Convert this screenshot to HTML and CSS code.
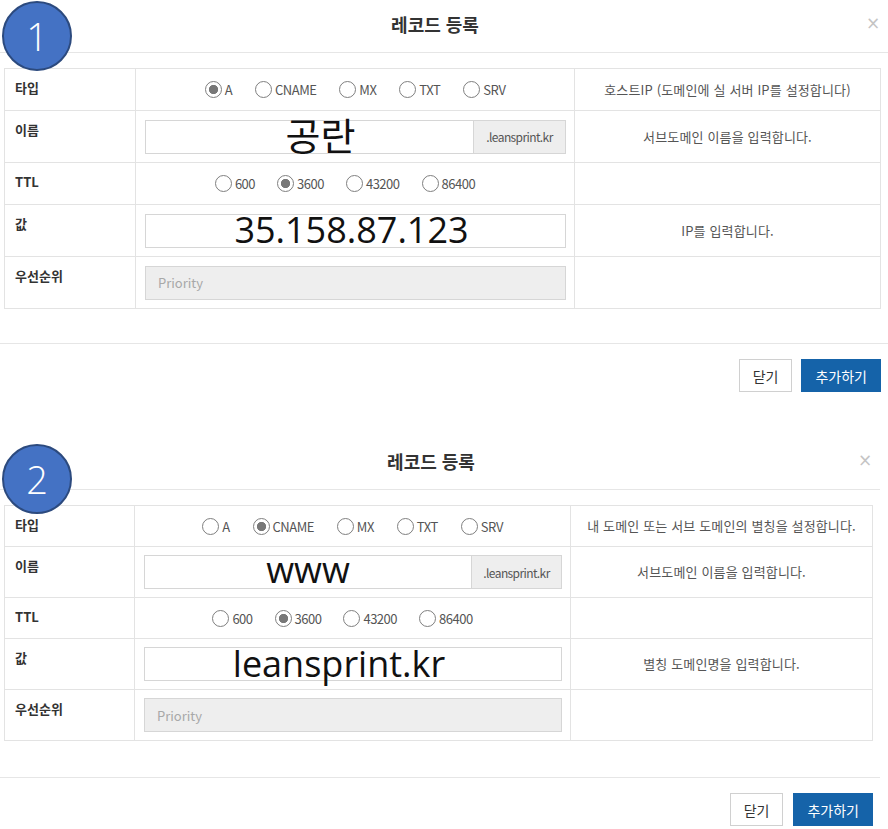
FILE: index.html
```html
<!DOCTYPE html>
<html lang="ko">
<head>
<meta charset="utf-8">
<title>레코드 등록</title>
<link rel="stylesheet" href="styles.css">
</head>
<body>
<section class="modal modal--one">
  <span class="badge">1</span>
  <header class="modal-head">
    <h2 class="modal-title">레코드 등록</h2>
    <button class="close" type="button">×</button>
  </header>
  <div class="modal-body">
    <table class="rec">
      <colgroup><col class="c1"><col class="c2"><col class="c3"></colgroup>
      <tr class="row-radio">
        <th>타입</th>
        <td><div class="radios">
          <label class="opt"><input type="radio" name="t1" checked>A</label>
          <label class="opt"><input type="radio" name="t1">CNAME</label>
          <label class="opt"><input type="radio" name="t1">MX</label>
          <label class="opt"><input type="radio" name="t1">TXT</label>
          <label class="opt"><input type="radio" name="t1">SRV</label>
        </div></td>
        <td class="desc">호스트IP (도메인에 실 서버 IP를 설정합니다)</td>
      </tr>
      <tr class="row-field">
        <th>이름</th>
        <td class="cell-field"><div class="field"><span class="field-text field-text--shift">공란</span><span class="addon">.leansprint.kr</span></div></td>
        <td class="desc">서브도메인 이름을 입력합니다.</td>
      </tr>
      <tr class="row-radio">
        <th>TTL</th>
        <td><div class="radios radios--ttl">
          <label class="opt"><input type="radio" name="l1">600</label>
          <label class="opt"><input type="radio" name="l1" checked>3600</label>
          <label class="opt"><input type="radio" name="l1">43200</label>
          <label class="opt"><input type="radio" name="l1">86400</label>
        </div></td>
        <td class="desc"></td>
      </tr>
      <tr class="row-field">
        <th>값</th>
        <td class="cell-field"><div class="field"><span class="field-text field-text--ip">35.158.87.123</span></div></td>
        <td class="desc">IP를 입력합니다.</td>
      </tr>
      <tr class="row-field">
        <th>우선순위</th>
        <td class="cell-field"><input class="field-input" type="text" placeholder="Priority" disabled></td>
        <td class="desc"></td>
      </tr>
    </table>
  </div>
  <footer class="modal-foot">
    <button class="btn" type="button">닫기</button>
    <button class="btn btn-primary" type="button">추가하기</button>
  </footer>
</section>

<section class="modal modal--two">
  <span class="badge">2</span>
  <header class="modal-head">
    <h2 class="modal-title">레코드 등록</h2>
    <button class="close" type="button">×</button>
  </header>
  <div class="modal-body">
    <table class="rec">
      <colgroup><col class="c1"><col class="c2"><col class="c3"></colgroup>
      <tr class="row-radio">
        <th>타입</th>
        <td><div class="radios">
          <label class="opt"><input type="radio" name="t2">A</label>
          <label class="opt"><input type="radio" name="t2" checked>CNAME</label>
          <label class="opt"><input type="radio" name="t2">MX</label>
          <label class="opt"><input type="radio" name="t2">TXT</label>
          <label class="opt"><input type="radio" name="t2">SRV</label>
        </div></td>
        <td class="desc">내 도메인 또는 서브 도메인의 별칭을 설정합니다.</td>
      </tr>
      <tr class="row-field">
        <th>이름</th>
        <td class="cell-field"><div class="field"><span class="field-text">www</span><span class="addon">.leansprint.kr</span></div></td>
        <td class="desc">서브도메인 이름을 입력합니다.</td>
      </tr>
      <tr class="row-radio">
        <th>TTL</th>
        <td><div class="radios radios--ttl">
          <label class="opt"><input type="radio" name="l2">600</label>
          <label class="opt"><input type="radio" name="l2" checked>3600</label>
          <label class="opt"><input type="radio" name="l2">43200</label>
          <label class="opt"><input type="radio" name="l2">86400</label>
        </div></td>
        <td class="desc"></td>
      </tr>
      <tr class="row-field">
        <th>값</th>
        <td class="cell-field"><div class="field"><span class="field-text field-text--left">leansprint.kr</span></div></td>
        <td class="desc">별칭 도메인명을 입력합니다.</td>
      </tr>
      <tr class="row-field">
        <th>우선순위</th>
        <td class="cell-field"><input class="field-input" type="text" placeholder="Priority" disabled></td>
        <td class="desc"></td>
      </tr>
    </table>
  </div>
  <footer class="modal-foot">
    <button class="btn" type="button">닫기</button>
    <button class="btn btn-primary" type="button">추가하기</button>
  </footer>
</section>
</body>
</html>
```

FILE: styles.css
```css
html, body {
  margin: 0;
  padding: 0;
  background: #fff;
}
body {
  font-family: "Noto Sans CJK KR", "Noto Sans", sans-serif;
  color: #333;
  width: 888px;
}

.modal {
  position: relative;
  width: 888px;
  box-sizing: border-box;
}
.modal--two {
  width: 880px;
}

.badge {
  position: absolute;
  left: 2px;
  top: 1px;
  width: 70px;
  height: 70px;
  box-sizing: border-box;
  border: 2px solid #2c4a7e;
  border-radius: 50%;
  background: #4472c4;
  color: #fff;
  font-family: "Open Sans", "Noto Sans", sans-serif;
  font-weight: 300;
  font-size: 38px;
  line-height: 1;
  display: flex;
  align-items: center;
  justify-content: center;
  z-index: 2;
}
.modal--two .badge {
  top: 7px;
}

.modal-head {
  display: flex;
  align-items: center;
  height: 52px;
  border-bottom: 1px solid #e6e6e6;
}
.modal-title {
  flex: 1;
  margin: 0;
  padding: 0 0 4px 6px;
  text-align: center;
  font-size: 18px;
  font-weight: 700;
  color: #333;
  line-height: 22px;
}
.close {
  width: 18px;
  margin-right: 6px;
  padding: 0 0 6px;
  border: 0;
  background: none;
  color: #c4c4c4;
  font-family: "DejaVu Sans", sans-serif;
  font-size: 17px;
  line-height: 20px;
}

.modal-body {
  padding: 15px 7px 34px 4px;
}
.modal--two .modal-body {
  padding-bottom: 36px;
}

.rec {
  width: 100%;
  border-collapse: collapse;
  table-layout: fixed;
}
.modal--one .c1 { width: 131px; }
.modal--one .c2 { width: 439px; }
.modal--two .c1 { width: 130px; }
.modal--two .c2 { width: 436px; }

.rec th,
.rec td {
  border: 1px solid #e3e3e3;
  padding: 0;
}
.rec th {
  text-align: left;
  vertical-align: top;
  padding: 9px 0 0 10px;
  font-size: 13px;
  font-weight: 700;
  line-height: 20px;
  color: #333;
}
.row-radio { height: 42px; }
.row-field { height: 52px; }
.modal--two .row-radio { height: 41px; }
.modal--two .row-field { height: 51px; }

.rec td {
  vertical-align: middle;
}
.desc {
  text-align: center;
  white-space: nowrap;
  font-size: 13px;
  letter-spacing: 0.15px;
  color: #555;
  line-height: 18px;
  padding: 0 2px;
}

.radios {
  display: flex;
  justify-content: center;
  align-items: center;
  gap: 23px;
}
.radios--ttl {
  gap: 22px;
  padding-right: 20px;
}
.opt {
  display: flex;
  align-items: center;
  gap: 3px;
  font-size: 13px;
  letter-spacing: -0.5px;
  color: #555;
  line-height: 17px;
}
.opt input {
  appearance: none;
  -webkit-appearance: none;
  width: 17px;
  height: 17px;
  margin: 0;
  border: 1px solid #7f7f7f;
  border-radius: 50%;
  background: #fff;
  box-sizing: border-box;
}
.opt input:checked {
  background: radial-gradient(circle, #787878 0 4.3px, #fff 5px);
}

.cell-field {
  padding: 0 8px 0 9px !important;
}
.field {
  display: flex;
  height: 34px;
  box-sizing: border-box;
  border: 1px solid #d6d6d6;
  background: #fff;
}
.field-text {
  flex: 1;
  text-align: center;
  font-family: "Open Sans", "Noto Sans CJK KR", sans-serif;
  font-size: 36px;
  line-height: 28px;
  color: #111;
  white-space: nowrap;
}
.field-text--shift {
  padding-left: 22px;
  font-size: 38px;
}
.field-text--ip {
  padding-right: 8px;
  line-height: 29px;
}
.field-text--left {
  padding-right: 28px;
  line-height: 32px;
}
.addon {
  width: 91px;
  flex: none;
  border-left: 1px solid #d6d6d6;
  background: #eee;
  font-size: 12px;
  letter-spacing: -0.6px;
  color: #555;
  display: flex;
  align-items: center;
  justify-content: center;
}
.modal--two .addon {
  width: 89px;
}
.field-input {
  display: block;
  width: 100%;
  height: 34px;
  box-sizing: border-box;
  border: 1px solid #d6d6d6;
  background: #eee;
  padding: 0 12px;
  font-family: "Noto Sans CJK KR", "Noto Sans", sans-serif;
  font-size: 13px;
}
.field-input::placeholder {
  color: #a8a8a8;
}

.modal-foot {
  display: flex;
  justify-content: flex-end;
  gap: 9px;
  border-top: 1px solid #e6e6e6;
  padding: 15px 7px 45px;
}
.modal--two .modal-foot {
  padding-bottom: 1px;
  gap: 10px;
}
.btn {
  height: 33px;
  padding: 0 13px;
  border: 1px solid #d0d0d0;
  background: #fff;
  color: #333;
  font-family: "Noto Sans CJK KR", "Noto Sans", sans-serif;
  font-size: 14px;
  line-height: 20px;
}
.btn-primary {
  background: #1563a9;
  border-color: #1563a9;
  color: #fff;
}
```
